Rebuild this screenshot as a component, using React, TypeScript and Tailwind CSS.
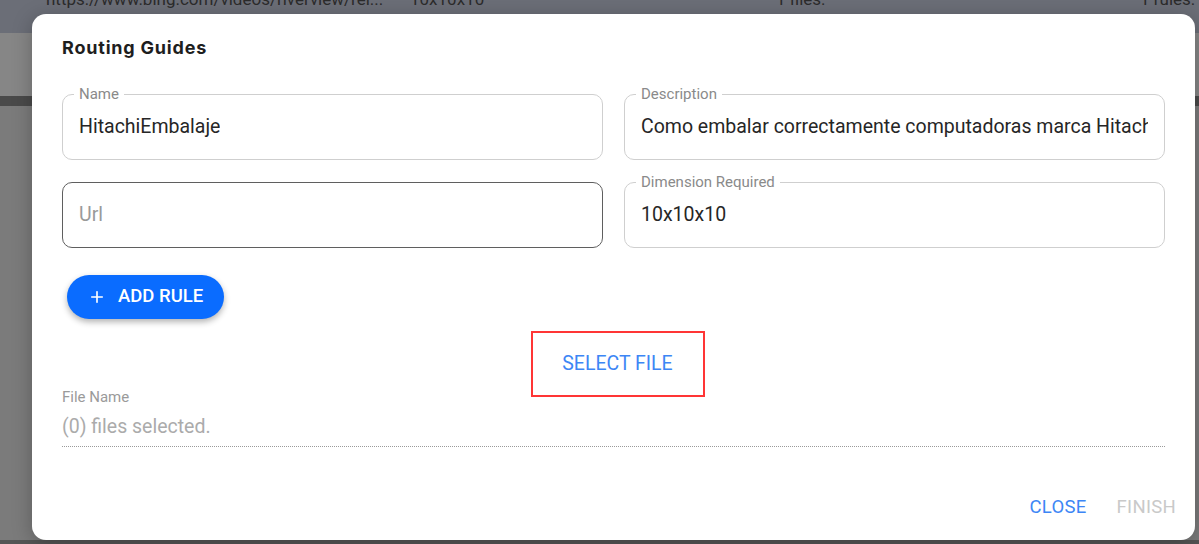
import { Plus } from 'lucide-react';

type FieldProps = {
  label?: string;
  value?: string;
  placeholder?: string;
  focused?: boolean;
};

function OutlinedField({ label, value, placeholder, focused }: FieldProps) {
  return (
    <div
      className={
        'relative flex h-[66px] items-center overflow-visible rounded-[10px] px-[16px] ' +
        (focused ? 'border border-[#5f5f5f]' : 'border border-[#cfcfcf]')
      }
    >
      {label && (
        <span className="absolute -top-[10px] left-[11px] bg-white px-[5px] text-[15px] leading-[18px] text-[#8a8a8a]">
          {label}
        </span>
      )}
      {value ? (
        <span className="overflow-hidden whitespace-nowrap text-[19.5px] text-[#262626]">
          {value}
        </span>
      ) : (
        <span className="text-[19.5px] text-[#9a9a9a]">{placeholder}</span>
      )}
    </div>
  );
}

export default function App() {
  return (
    <div
      className="relative h-[544px] w-[1199px] overflow-hidden bg-[#7a7a7a]"
      style={{ fontFamily: 'Roboto, "Liberation Sans", sans-serif' }}
    >
      {/* page behind the modal */}
      <div className="flex h-full flex-col">
        <div className="h-[33px] bg-[#6b6e77]">
          <div className="-mt-[13px] flex text-[17px] leading-[24px] text-[#2b2b2b]">
            <span className="ml-[46px] w-[364px] whitespace-nowrap">
              https://www.bing.com/videos/riverview/rel...
            </span>
            <span className="w-[366px]">10x10x10</span>
            <span className="w-[364px]">1 files.</span>
            <span className="whitespace-nowrap">1 rules.</span>
          </div>
        </div>
        <div className="h-[63px] bg-[#868686]" />
        <div className="h-[10px] bg-[#4a4a4a]" />
        <div className="flex-1 bg-[#7b7b7b]" />
        <div className="h-[4px] bg-[#565656]" />
      </div>

      {/* modal */}
      <div className="absolute left-[32px] top-[14px] flex h-[526px] w-[1163px] flex-col rounded-[14px] bg-white px-[30px] pt-[22px] shadow-[0_4px_20px_rgba(0,0,0,0.25)]">
        <h2
          className="text-[18px] font-bold leading-[24px] tracking-[0.8px] text-[#1e1e1e]"
          style={{ fontFamily: 'Inter, Lato, sans-serif' }}
        >
          Routing Guides
        </h2>

        <div className="mt-[34px] grid grid-cols-2 gap-x-[21px] gap-y-[22px]">
          <OutlinedField label="Name" value="HitachiEmbalaje" />
          <OutlinedField
            label="Description"
            value="Como embalar correctamente computadoras marca Hitachi"
          />
          <OutlinedField placeholder="Url" focused />
          <OutlinedField label="Dimension Required" value="10x10x10" />
        </div>

        <button className="ml-[5px] mt-[27px] flex h-[44px] w-[157px] items-center gap-[12px] rounded-full bg-[#0a6cff] pl-[21px] text-[18.5px] font-medium text-white shadow-[0_3px_6px_rgba(0,0,0,0.3)]">
          <Plus className="h-[18px] w-[18px]" strokeWidth={2.2} />
          ADD RULE
        </button>

        <div className="mt-[12px] flex justify-center pl-[8px]">
          <div className="flex h-[66px] w-[174px] items-center justify-center border-2 border-[#ff3535]">
            <span className="text-[19.5px] text-[#3d86f5]">SELECT FILE</span>
          </div>
        </div>

        <div className="-mt-[9px] text-[15px] leading-[18px] text-[#9a9a9a]">File Name</div>
        <div className="mt-[8px] text-[19.5px] leading-[26px] text-[#ababab]">
          (0) files selected.
        </div>
        <div className="mt-[6px] border-b border-dotted border-[#9a9a9a]" />

        <div className="flex-1" />

        <div className="-mr-[11px] flex justify-end gap-[30px] pb-[21px] text-[18.5px] leading-[24px] tracking-[0.3px]">
          <span className="text-[#3d86f5]">CLOSE</span>
          <span className="text-[#c9c9c9]">FINISH</span>
        </div>
      </div>
    </div>
  );
}
